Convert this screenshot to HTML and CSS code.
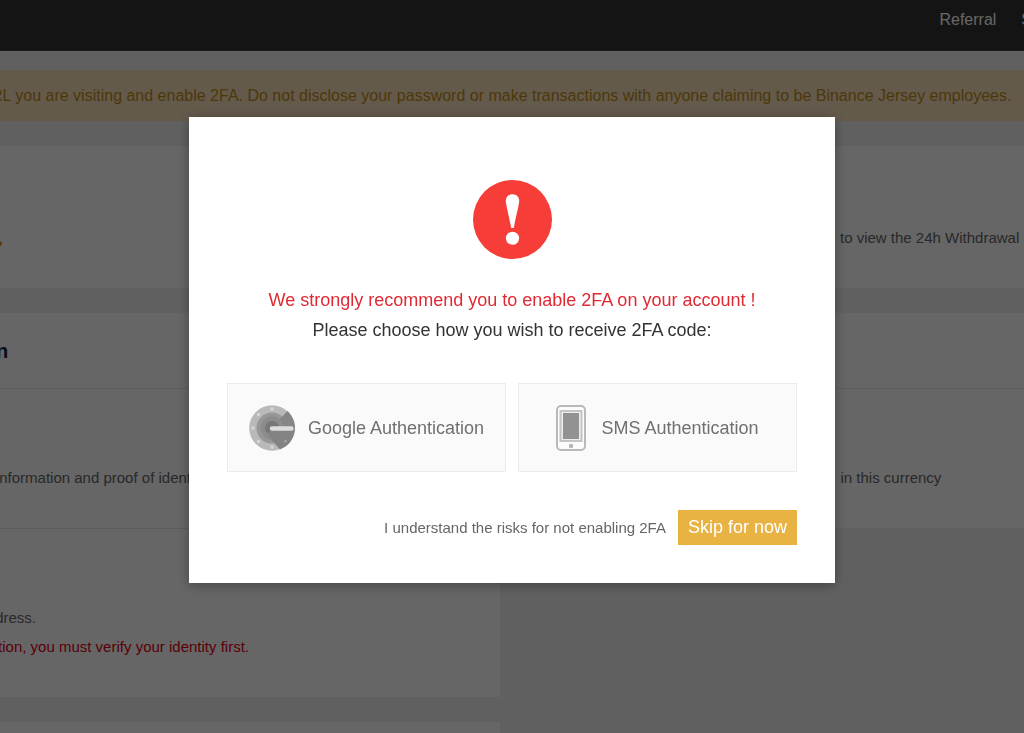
FILE: index.html
```html
<!DOCTYPE html>
<html lang="en">
<head>
<meta charset="utf-8">
<title>Enable 2FA</title>
<link rel="stylesheet" href="styles.css">
</head>
<body>
<header class="topbar">
  <nav class="topnav"><a href="#">Referral</a><a href="#">S</a></nav>
</header>
<main class="page">
  <div class="notice"><span>RL you are visiting and enable 2FA. Do not disclose your password or make transactions with anyone claiming to be Binance Jersey employees.</span></div>
  <section class="card summary">
    <span class="dot"></span>
    <p>to view the 24h Withdrawal</p>
  </section>
  <div class="columns">
    <div class="column">
      <section class="card">
        <h2 class="card-title"><span>n</span></h2>
        <div class="card-row"><p class="tail identity">nformation and proof of identity</p></div>
        <div class="card-row address">
          <p class="tail street">dress.</p>
          <p class="tail warning">tion, you must verify your identity first.</p>
        </div>
      </section>
      <section class="card next"></section>
    </div>
    <div class="column">
      <section class="card">
        <h2 class="card-title"></h2>
        <div class="card-row"><p class="currency">in this currency</p></div>
      </section>
    </div>
  </div>
</main>
<div class="overlay">
  <div class="modal" role="dialog" aria-modal="true" aria-labelledby="modal-title">
    <svg class="alert-icon" viewBox="0 0 78 78" aria-hidden="true">
      <circle cx="39" cy="39" r="39" fill="#f63d38"/>
      <path d="M39 14c-4.200 0-6.800 3-6.600 7 .2 4 3.300 15 5.300 26.500h2.600c2-11.500 5.100-22.500 5.300-26.500.2-4-2.400-7-6.600-7z" fill="#fff"/>
      <circle cx="39" cy="57.500" r="6.500" fill="#fff"/>
    </svg>
    <h1 class="headline" id="modal-title">We strongly recommend you to enable 2FA on your account !</h1>
    <p class="prompt">Please choose how you wish to receive 2FA code:</p>
    <div class="methods">
      <a class="method" href="#">
        <svg class="dial-icon" viewBox="0 0 46 46" aria-hidden="true">
          <circle cx="23" cy="23" r="22.800" fill="#b9b9b9"/>
          <circle cx="23" cy="23" r="15.500" fill="#979797"/>
          <path d="M38.500 6A22.800 22.800 0 0 1 31 44.300L16 28l7-8 6-4z" fill="#868686"/>
          <circle cx="23" cy="23" r="11.500" fill="#8c8c8c"/>
          <circle cx="23" cy="23" r="7" fill="#777"/>
          <path d="M18 28L31 44.300A22.800 22.800 0 0 0 45.500 26L24 25z" fill="#838383"/>
          <g fill="#d6d6d6"><circle cx="23" cy="4" r="1.700"/><circle cx="9.500" cy="9.500" r="1.700"/><circle cx="4" cy="23" r="1.700"/><circle cx="9.500" cy="36.500" r="1.700"/><circle cx="23" cy="42" r="1.700"/></g>
          <circle cx="36.500" cy="36" r="1.500" fill="#a0a0a0"/>
          <path d="M23 23.500h19.500" stroke="#dcdcdc" stroke-width="4.400" stroke-linecap="round"/>
        </svg>
        <span>Google Authentication</span>
      </a>
      <a class="method" href="#">
        <svg class="phone-icon" viewBox="0 0 30 46" aria-hidden="true">
          <rect x="1" y="1" width="28" height="44" rx="4" fill="#fcfcfc" stroke="#b9b9b9" stroke-width="2"/>
          <rect x="4.500" y="6" width="21" height="30" fill="#ededed" stroke="#c4c4c4" stroke-width="2"/>
          <rect x="7" y="8" width="16" height="26" fill="#929292"/>
          <circle cx="15" cy="41" r="2.200" fill="#b5b5b5"/>
        </svg>
        <span>SMS Authentication</span>
      </a>
    </div>
    <div class="actions">
      <span>I understand the risks for not enabling 2FA</span>
      <button type="button" class="skip">Skip for now</button>
    </div>
  </div>
</div>
</body>
</html>
```
FILE: styles.css
```css
* { box-sizing: border-box; }
body {
  display: flex;
  flex-direction: column;
  margin: 0;
  min-height: 100vh;
  overflow-x: hidden;
  background: #f1f1f1;
  color: #666;
  font: 15px/20px "Liberation Sans", Arial, sans-serif;
}
h1, h2, p { margin: 0; }
a { color: inherit; text-decoration: none; }
.topbar {
  padding: 10px 0 20px;
  overflow: hidden;
  background: #333;
  border-bottom: 1px solid #4a4a4a;
  color: #fff;
}
.topnav {
  display: flex;
  justify-content: flex-end;
  gap: 25px;
  margin-right: -8px;
  font-size: 16px;
}
.page {
  display: flex;
  flex: 1;
  flex-direction: column;
  gap: 25px;
  padding-top: 19px;
}
.notice {
  padding: 15px 0;
  overflow: hidden;
  background: #fae0bd;
  color: #bf8c14;
  font-size: 16px;
  line-height: 21px;
  text-indent: -9px;
  white-space: nowrap;
}
.card { background: #fff; }
.summary {
  display: flex;
  align-items: center;
  justify-content: space-between;
  padding: 82px 0 40px;
  white-space: nowrap;
}
.summary p { flex: 0 0 184px; }
.dot {
  width: 5px;
  height: 5px;
  margin: 10px 0 0 -3px;
  border-radius: 50%;
  background: #e98c35;
}
.columns {
  display: grid;
  flex: 1;
  grid-template-columns: 1fr 1fr;
  gap: 25px;
}
.column {
  display: flex;
  flex-direction: column;
  gap: 25px;
  min-width: 0;
}
.card-title {
  display: flex;
  height: 75px;
  padding-top: 26px;
  color: #102040;
  font-size: 20px;
  line-height: 24px;
}
.card-title span { margin-left: -4px; }
.card-row {
  padding: 79px 0 40px;
  border-top: 1px solid #e6e6e6;
}
.tail {
  display: flex;
  justify-content: flex-end;
  overflow: hidden;
  white-space: nowrap;
}
.identity { width: 206px; }
.street { width: 36px; }
.warning { width: 249px; color: #df0010; }
.address {
  display: flex;
  flex-direction: column;
  gap: 9px;
}
.currency { padding-left: 316px; white-space: nowrap; }
.next { flex: 1; }
.overlay {
  position: fixed;
  inset: 0;
  display: flex;
  align-items: flex-start;
  justify-content: center;
  padding-top: 117px;
  background: rgba(0, 0, 0, .6);
}
.modal {
  display: flex;
  flex-direction: column;
  align-items: center;
  width: 100%;
  max-width: 646px;
  padding: 63px 38px 38px;
  background: #fff;
  box-shadow: 0 2px 12px rgba(0, 0, 0, .35);
}
.alert-icon { width: 79px; height: 79px; }
.headline, .prompt {
  font-size: 18px;
  font-weight: 400;
  line-height: 30px;
}
.headline { margin-top: 26px; color: #e02a33; }
.prompt { color: #333; }
.methods {
  display: grid;
  grid-template-columns: 1fr 1fr;
  gap: 12px;
  width: 100%;
  margin-top: 38px;
}
.method {
  display: flex;
  align-items: center;
  justify-content: center;
  gap: 13px;
  height: 89px;
  background: #fafafa;
  border: 1px solid #ebebeb;
  color: #707070;
  font-size: 18px;
}
.dial-icon { width: 46px; height: 46px; }
.phone-icon { width: 30px; height: 46px; }
.method:last-child { gap: 15px; }
.actions {
  display: flex;
  align-items: center;
  align-self: flex-end;
  gap: 12px;
  margin-top: 38px;
}
.skip {
  padding: 0 10px;
  border: 0;
  background: #e8b342;
  color: #fff;
  font: 18px/35px "Liberation Sans", Arial, sans-serif;
}
```
